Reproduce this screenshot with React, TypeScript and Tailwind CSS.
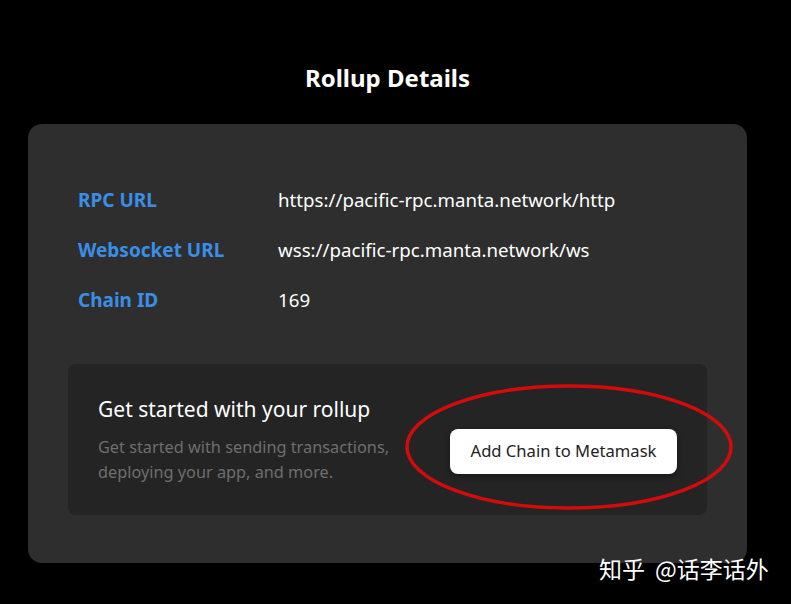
const rows = [
  { label: 'RPC URL', value: 'https://pacific-rpc.manta.network/http' },
  { label: 'Websocket URL', value: 'wss://pacific-rpc.manta.network/ws' },
  { label: 'Chain ID', value: '169' },
];

export default function App() {
  return (
    <div className="relative h-[604px] w-[791px] overflow-hidden bg-black font-['Noto_Sans',sans-serif]">
      <h1 className="pr-[16px] pt-[61px] text-center text-[24px] font-bold leading-[34px] text-white">
        Rollup Details
      </h1>

      <div className="ml-[28px] mt-[29px] h-[439px] w-[719px] rounded-[14px] bg-[#2e2e2e] px-[40px] pt-[63px]">
        <div className="flex flex-col gap-[24px] px-[10px]">
          {rows.map(row => (
            <div key={row.label} className="flex items-center leading-[26px]">
              <span className="w-[200px] text-[19px] font-bold text-[#3a8ee6]">{row.label}</span>
              <span className="text-[18.7px] text-white">{row.value}</span>
            </div>
          ))}
        </div>

        <div className="mt-[51px] flex h-[151px] items-center justify-between rounded-[8px] bg-[#242424] pl-[30px] pr-[30px]">
          <div className="flex flex-col">
            <div className="text-[21px] leading-[28px] text-white">Get started with your rollup</div>
            <div className="mt-[12px] w-[300px] text-[16.3px] leading-[25px] text-[#6e6e6e]">
              Get started with sending transactions, deploying your app, and more.
            </div>
          </div>
          <button
            type="button"
            className="mt-[24px] h-[45px] w-[227px] rounded-[8px] bg-white text-[16.6px] text-[#222] shadow-[0_2px_6px_rgba(0,0,0,0.4)]"
          >
            Add Chain to Metamask
          </button>
        </div>
      </div>

      {/* red annotation ellipse */}
      <svg
        className="pointer-events-none absolute left-[404px] top-[383px]"
        width="330"
        height="128"
        viewBox="0 0 330 128"
        fill="none"
      >
        <ellipse cx="165" cy="64" rx="162" ry="61" stroke="#d40b0b" strokeWidth="3.5" />
      </svg>

      {/* watermark */}
      <div className="absolute left-[599px] top-[553px] flex gap-[10px] font-['Noto_Sans_CJK_SC',sans-serif] text-[23px] leading-[30px] text-white">
        <span>知乎</span>
        <span>@话李话外</span>
      </div>
    </div>
  );
}
